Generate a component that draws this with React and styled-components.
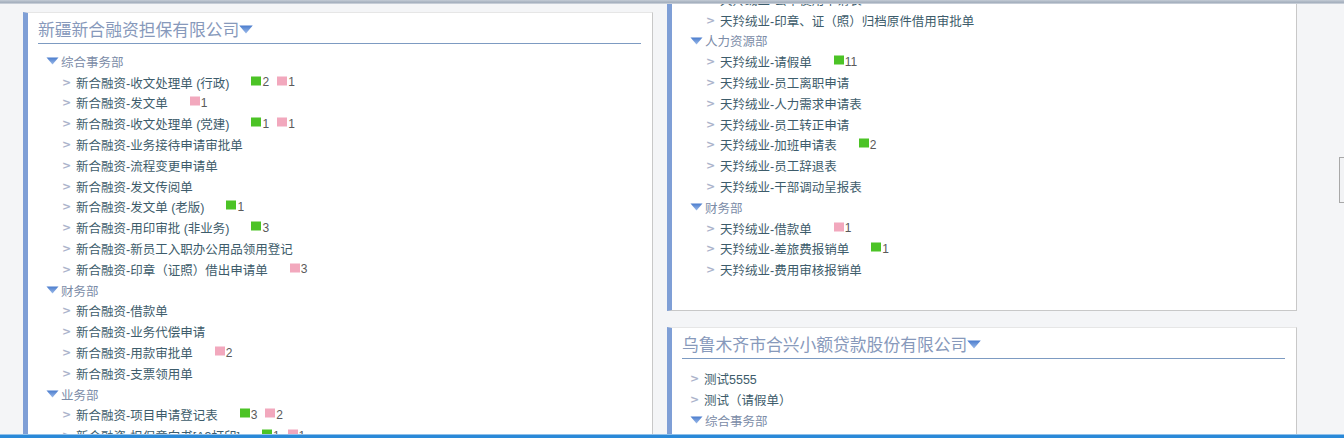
import React from 'react';
import styled, { createGlobalStyle } from 'styled-components';

const GlobalStyle = createGlobalStyle`
  html, body {
    margin: 0;
    padding: 0;
  }
  body {
    background: #f4f5f7;
    font-family: "Liberation Sans", "Noto Sans CJK SC", sans-serif;
    overflow: hidden;
  }
`;

const Page = styled.div`
  position: relative;
  height: 438px;
  display: flex;
  flex-direction: column;
  background: #f4f5f7;
`;

const TopBar = styled.div`
  flex: none;
  height: 4px;
  background: linear-gradient(#c4ccd6, #a4afbd 60%, #d5dbe2);
`;

const BottomBar = styled.div`
  flex: none;
  height: 3px;
  border-top: 1px solid #8fc0ea;
  background: #2a89d8;
`;

const Content = styled.div`
  flex: 1;
  min-height: 0;
  overflow: hidden;
  display: flex;
  align-items: flex-start;
  gap: 14px;
  padding: 8px 0 0 23px;
`;

const Column = styled.div`
  width: 630px;
  flex: none;
  display: flex;
  flex-direction: column;
  gap: 16px;
`;

const Panel = styled.div`
  box-sizing: border-box;
  background: #fff;
  border-left: 5px solid #7f9fd6;
  border-right: 1px solid #c8c8c8;
  border-top: 1px solid #e6e6e6;
  border-bottom: 1px solid #c8c8c8;
  padding: 0 11px 0 10px;
`;

const ScrolledPanel = styled(Panel)`
  margin-top: -24px;
  padding-bottom: 30px;
`;

const Title = styled.div`
  display: flex;
  align-items: center;
  height: 26px;
  margin-top: 3px;
  padding-bottom: 1px;
  border-bottom: 1px solid #7d9bc2;
  font-family: "Noto Sans CJK SC", sans-serif;
  font-size: 16.8px;
  color: #8799bb;
  white-space: nowrap;
`;

const List = styled.div`
  padding-top: ${(p) => p.$top || 0}px;
`;

const Row = styled.div`
  height: 20.8px;
  display: flex;
  align-items: center;
  padding-left: ${(p) => p.$indent}px;
  font-size: 12.5px;
  white-space: nowrap;
`;

const GroupName = styled.span`
  color: #7b8ca7;
`;

const Arrow = styled.span`
  width: 14px;
  flex: none;
  font-family: "DejaVu Sans", sans-serif;
  font-size: 11px;
  font-weight: bold;
  color: #abb4cb;
`;

const ItemName = styled.span`
  color: #3d5c6b;
`;

const Badges = styled.span`
  display: inline-flex;
  align-items: center;
  gap: 8px;
  margin-left: 22px;
`;

const Badge = styled.span`
  display: inline-flex;
  align-items: center;
  font-family: "Liberation Sans", sans-serif;
  font-size: 12px;
  color: #5a5a5a;

  &::before {
    content: '';
    width: 10px;
    height: 9px;
    margin-right: 1px;
    background: ${(p) => (p.$kind === 'green' ? '#4cc326' : '#f2a8bd')};
    transform: translateY(-1.5px);
  }
`;

const Handle = styled.div`
  position: absolute;
  left: 1339px;
  top: 157px;
  width: 10px;
  height: 46px;
  box-sizing: border-box;
  border: 1px solid #a8a8a8;
  background: #f2f3f5;
  display: flex;
  align-items: center;
  padding-left: 2px;
  font-size: 10px;
  color: #333;
  line-height: 1;
`;

const Caret = ({ w = 12, h = 8 }) => (
  <svg width={w} height={h} viewBox="0 0 12 8" style={{ flex: 'none' }}>
    <defs>
      <linearGradient id="caretFill" x1="0" y1="0" x2="0" y2="1">
        <stop offset="0" stopColor="#4a7ccd" />
        <stop offset="1" stopColor="#9dbbea" />
      </linearGradient>
    </defs>
    <polygon points="0,0.5 12,0.5 6,7.5" fill="url(#caretFill)" />
  </svg>
);

const GroupCaret = styled.span`
  width: 15px;
  flex: none;
  display: flex;
  align-items: center;
`;

const Group = ({ name, indent = 8 }) => (
  <Row $indent={indent}>
    <GroupCaret>
      <Caret w={13} h={8} />
    </GroupCaret>
    <GroupName>{name}</GroupName>
  </Row>
);

const Item = ({ name, badges = [], indent = 24 }) => (
  <Row $indent={indent}>
    <Arrow>&gt;</Arrow>
    <ItemName>{name}</ItemName>
    {badges.length > 0 && (
      <Badges>
        {badges.map(([kind, n], i) => (
          <Badge key={i} $kind={kind}>
            {n}
          </Badge>
        ))}
      </Badges>
    )}
  </Row>
);

const renderEntries = (entries) =>
  entries.map((e, i) =>
    e.group ? (
      <Group key={i} name={e.group} />
    ) : (
      <Item key={i} name={e.name} badges={e.badges} indent={e.top ? 8 : 24} />
    )
  );

const xinhe = [
  { group: '综合事务部' },
  { name: '新合融资-收文处理单 (行政)', badges: [['green', 2], ['pink', 1]] },
  { name: '新合融资-发文单', badges: [['pink', 1]] },
  { name: '新合融资-收文处理单 (党建)', badges: [['green', 1], ['pink', 1]] },
  { name: '新合融资-业务接待申请审批单' },
  { name: '新合融资-流程变更申请单' },
  { name: '新合融资-发文传阅单' },
  { name: '新合融资-发文单 (老版)', badges: [['green', 1]] },
  { name: '新合融资-用印审批 (非业务)', badges: [['green', 3]] },
  { name: '新合融资-新员工入职办公用品领用登记' },
  { name: '新合融资-印章（证照）借出申请单', badges: [['pink', 3]] },
  { group: '财务部' },
  { name: '新合融资-借款单' },
  { name: '新合融资-业务代偿申请' },
  { name: '新合融资-用款审批单', badges: [['pink', 2]] },
  { name: '新合融资-支票领用单' },
  { group: '业务部' },
  { name: '新合融资-项目申请登记表', badges: [['green', 3], ['pink', 2]] },
  { name: '新合融资-担保意向书[A3打印]', badges: [['green', 1], ['pink', 1]] },
  { name: '新合融资-项目评审会议纪要' },
];

const tianling = [
  { name: '天羚绒业-公章使用申请表' },
  { name: '天羚绒业-印章、证（照）归档原件借用审批单' },
  { group: '人力资源部' },
  { name: '天羚绒业-请假单', badges: [['green', 11]] },
  { name: '天羚绒业-员工离职申请' },
  { name: '天羚绒业-人力需求申请表' },
  { name: '天羚绒业-员工转正申请' },
  { name: '天羚绒业-加班申请表', badges: [['green', 2]] },
  { name: '天羚绒业-员工辞退表' },
  { name: '天羚绒业-干部调动呈报表' },
  { group: '财务部' },
  { name: '天羚绒业-借款单', badges: [['pink', 1]] },
  { name: '天羚绒业-差旅费报销单', badges: [['green', 1]] },
  { name: '天羚绒业-费用审核报销单' },
];

const hexing = [
  { name: '测试5555', top: true },
  { name: '测试（请假单）', top: true },
  { group: '综合事务部' },
  { name: '合兴小贷-收文处理单' },
];

export default function App() {
  return (
    <>
      <GlobalStyle />
      <Page>
        <TopBar />
        <Content>
          <Column>
            <Panel>
              <Title>
                新疆新合融资担保有限公司
                <Caret w={14} h={9} />
              </Title>
              <List $top={7}>{renderEntries(xinhe)}</List>
            </Panel>
          </Column>
          <Column>
            <ScrolledPanel>
              <List>{renderEntries(tianling)}</List>
            </ScrolledPanel>
            <Panel>
              <Title>
                乌鲁木齐市合兴小额贷款股份有限公司
                <Caret w={14} h={9} />
              </Title>
              <List $top={9}>{renderEntries(hexing)}</List>
            </Panel>
          </Column>
        </Content>
        <BottomBar />
        <Handle>⋮</Handle>
      </Page>
    </>
  );
}
